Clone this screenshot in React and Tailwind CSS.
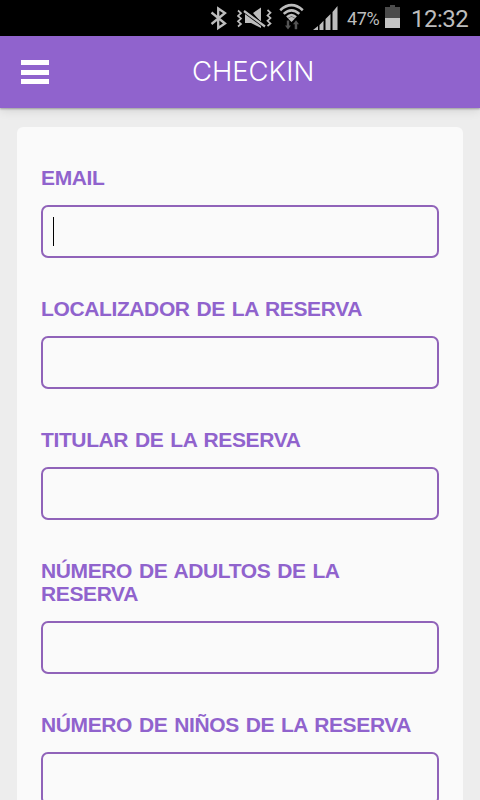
const fields = [
  'EMAIL',
  'LOCALIZADOR DE LA RESERVA',
  'TITULAR DE LA RESERVA',
  'NÚMERO DE ADULTOS DE LA RESERVA',
  'NÚMERO DE NIÑOS DE LA RESERVA',
];

function StatusBar() {
  return (
    <div className="flex h-9 shrink-0 bg-black font-['Roboto',sans-serif] text-[#bdbdbd]">
      <svg width="140" height="36" viewBox="0 0 140 36" className="ml-[200px] shrink-0" fill="none" stroke="#bdbdbd">
        <path d="M11.5 12.5 L25 23.5 L18.2 28 V8.5 L25 13 L11.5 24" strokeWidth="2.3" />
        <path d="M38 10.5l3 2.7-3 2.7 3 2.7-3 2.7 3 2.7-3 2.5M67.5 10l3 2.7-3 2.7 3 2.7-3 2.7 3 2.7-3 2.5" strokeWidth="1.7" />
        <path d="M53 13L61 7.5v14.5zM45 13.5v9.5h6l10 5v-2.5L46.5 13.5z" fill="#bdbdbd" stroke="none" />
        <path d="M44 11l21 15.5" stroke="#000" strokeWidth="3.8" />
        <path d="M44 11l21 15.5" strokeWidth="2.2" />
        <path d="M80.2 10.2Q91.5 .2 102.8 10.2M83.7 13.9Q91.5 7 99.3 13.9M87 17.2Q91.5 13 96 17.2" strokeWidth="2.6" />
        <path d="M88 18.4Q91.5 15.5 95 18.4L91.5 22z" fill="#bdbdbd" stroke="none" />
        <path d="M86.8 20.5h2.4v5H91l-3 4-3-4h1.8zM94.7 29.2h2.5v-5H99l-3-4-3 4h1.7z" fill="#555" stroke="none" />
        <path d="M113 30l5-4v4zM119.5 25l4-4.2V30h-4zM125.5 19l5-5v16h-5zM132.5 12l5-6v24h-5z" fill="#bdbdbd" stroke="none" />
      </svg>
      <span className="ml-[7px] mt-[7px] w-[34px] shrink-0 whitespace-nowrap text-[18px] leading-6 tracking-[-0.4px]">47%</span>
      <svg width="16" height="36" viewBox="0 0 16 36" className="ml-[4px] shrink-0">
        <path d="M0 7h5V5h5v2h5v11H0z" fill="#4b4b4b" />
        <path d="M0 18h15v10H0z" fill="#c4c4c4" />
      </svg>
      <span className="ml-[10px] mt-[4px] whitespace-nowrap text-[24px] leading-[30px] tracking-[-0.5px]">12:32</span>
    </div>
  );
}

function Header() {
  return (
    <header className="relative z-10 flex h-[72px] shrink-0 items-center bg-[#9063cd] shadow-[0_1px_2px_rgba(0,0,0,0.3),0_2px_10px_rgba(0,0,0,0.12)]">
      <button aria-label="Menu" className="ml-[21px] flex w-7 flex-col gap-[4.5px]">
        <span className="h-[5px] bg-white" />
        <span className="h-[5px] bg-white" />
        <span className="h-[5px] bg-white" />
      </button>
      <h1 className="mb-0.5 ml-[143px] whitespace-nowrap font-['Inter','Liberation_Sans',sans-serif] text-[27.5px] leading-8 font-light tracking-[-0.05px] text-white">CHECKIN</h1>
    </header>
  );
}

export default function App() {
  return (
    <div className="flex h-[800px] w-[480px] flex-col overflow-hidden bg-[#ededed] font-['Liberation_Sans',Arial,sans-serif]">
      <StatusBar />
      <Header />
      <main className="mx-[17px] mt-[19px] flex shrink-0 flex-col gap-10 rounded-md bg-[#fafafa] px-6 pt-[39px] pb-10">
        {fields.map((label, i) => (
          <div key={label} className="flex flex-col">
            <span className="mb-4 text-[21px] leading-[23px] font-bold tracking-[-0.38px] [word-spacing:1.4px] text-[#9063cd]">{label}</span>
            <div className="-mb-px flex h-[53px] items-center rounded-[7px] border-2 border-[#9063b9] px-[10px]">
              {i === 0 && <span className="h-[29px] w-px bg-black" />}
            </div>
          </div>
        ))}
      </main>
    </div>
  );
}
